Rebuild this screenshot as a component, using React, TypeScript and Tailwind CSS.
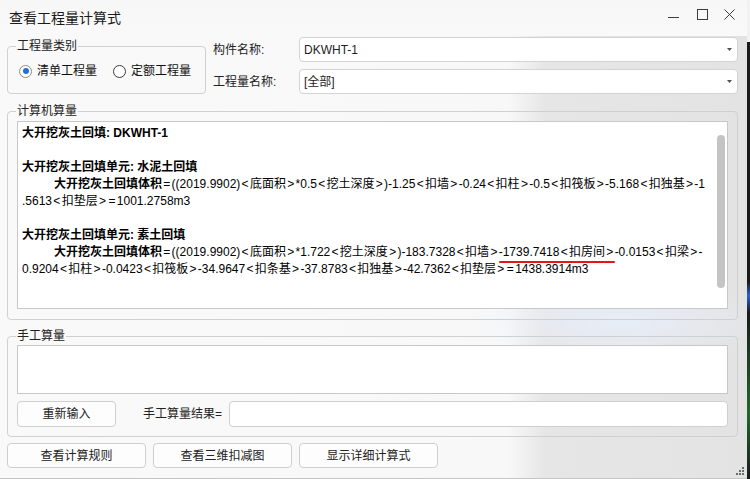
import React from "react";

const F = "font-['Liberation_Sans','Noto_Sans_CJK_SC',sans-serif]";

function Formula({ text }: { text: string }) {
  const parts = text.split(/([<>=])/);
  return (
    <>
      {parts.map((p, i) =>
        p === "<" || p === ">" || p === "=" ? (
          <span key={i} className="inline-block w-[9.6px] text-center">
            {p}
          </span>
        ) : (
          <React.Fragment key={i}>{p}</React.Fragment>
        )
      )}
    </>
  );
}

function Combo({ value, className = "" }: { value: string; className?: string }) {
  return (
    <div
      className={`flex-1 flex items-center bg-white border border-[#d3d3d3] rounded-[4px] pl-[4px] pr-[5px] ${className}`}
    >
      <span className="flex-1 text-[12px] text-[#1e1e1e]">{value}</span>
      <svg width="5" height="3" viewBox="0 0 5 3">
        <path d="M0 0H5L2.5 3Z" fill="#505050" />
      </svg>
    </div>
  );
}

function Radio({ checked, label }: { checked: boolean; label: string }) {
  return (
    <div className="flex items-center">
      <div
        className={`w-[13px] h-[13px] rounded-full bg-white border flex items-center justify-center ${
          checked ? "border-[#8a8a8a]" : "border-[#3a3a3a]"
        }`}
      >
        {checked && <div className="w-[6px] h-[6px] rounded-full bg-[#1f6fdc]" />}
      </div>
      <span className="ml-[5px] text-[12px] leading-[14px] text-[#111]">{label}</span>
    </div>
  );
}

function Btn({ label, className = "" }: { label: string; className?: string }) {
  return (
    <div
      className={`flex items-center justify-center bg-[#fdfdfd] border border-[#cfcfcf] rounded-[4px] text-[12px] text-[#222] ${className}`}
    >
      {label}
    </div>
  );
}

export default function App() {
  return (
    <div className={`w-[750px] h-[479px] flex overflow-hidden ${F}`}>
      <div className="relative w-[747px] h-[479px] flex flex-col border-b border-[#c4c4c4] bg-[radial-gradient(ellipse_150px_40px_at_620px_322px,#e7edf8,transparent),linear-gradient(to_right,#f9f9f9_0%,#f8f8f8_68%,#e6e6e6_73%,#e3e3e3_100%)]">
        {/* title bar */}
        <div className="h-[36px] flex items-center bg-[linear-gradient(to_bottom,#f7f7f7,#f9f9f9)] shrink-0">
          <span className="pl-[9px] text-[14px] text-[#1b1b1b]">查看工程量计算式</span>
          <div className="ml-auto flex items-start pr-[12px] h-[11px] mt-[-8px]">
            <svg width="11" height="11" viewBox="0 0 11 11">
              <path d="M0 8.5H11" stroke="#3c3c3c" strokeWidth="1" />
            </svg>
            <svg width="11" height="11" viewBox="0 0 11 11" className="ml-[18px]">
              <rect x="0.5" y="0.5" width="10" height="10" fill="none" stroke="#3c3c3c" strokeWidth="1" />
            </svg>
            <svg width="11" height="11" viewBox="0 0 11 11" className="ml-[16px]">
              <path d="M0.5 0.5L10.5 10.5M10.5 0.5L0.5 10.5" stroke="#3c3c3c" strokeWidth="1" />
            </svg>
          </div>
        </div>

        {/* body */}
        <div className="flex flex-col pl-[7px] pr-[9px]">
          {/* row 1 */}
          <div className="flex items-start">
            <fieldset className="w-[199px] h-[55px] mt-[3px] border border-[#d0d0d0] rounded-[4px]">
              <legend className="ml-[8px] px-[1px] text-[12px] leading-[14px] text-[#222]">工程量类别</legend>
              <div className="mt-[11px] h-[14px] flex items-center pl-[11px]">
                <Radio checked label="清单工程量" />
                <div className="ml-[16px]">
                  <Radio checked={false} label="定额工程量" />
                </div>
              </div>
            </fieldset>
            <div className="flex-1 ml-[7px] mt-[1px] flex flex-col">
              <div className="flex items-center h-[25px]">
                <span className="w-[86px] text-[12px] text-[#222]">构件名称:</span>
                <Combo value="DKWHT-1" className="h-[25px]" />
              </div>
              <div className="flex items-center h-[25px] mt-[7px]">
                <span className="w-[86px] text-[12px] text-[#222]">工程量名称:</span>
                <Combo value="[全部]" className="h-[25px]" />
              </div>
            </div>
          </div>

          {/* computer calc */}
          <fieldset className="mt-[10px] h-[216px] border border-[#d0d0d0] rounded-[4px]">
            <legend className="ml-[8px] px-[1px] text-[12px] leading-[14px] text-[#222]">计算机算量</legend>
            <div className="mt-[3px] mx-[9px] h-[188px] bg-white border border-[#c8c8c8] flex">
              <div className="flex-1 pl-[4px] pt-[3px] text-[12px] leading-[17px] text-black overflow-hidden">
                <div className="h-[17px] whitespace-nowrap font-bold">大开挖灰土回填: DKWHT-1</div>
                <div className="h-[17px]" />
                <div className="h-[17px] whitespace-nowrap font-bold">大开挖灰土回填单元: 水泥土回填</div>
                <div className="h-[17px] whitespace-nowrap pl-[32px]">
                  <span className="font-bold">大开挖灰土回填体积</span>
                  <Formula text="=((2019.9902)<底面积>*0.5<挖土深度>)-1.25<扣墙>-0.24<扣柱>-0.5<扣筏板>-5.168<扣独基>-1" />
                </div>
                <div className="h-[17px] whitespace-nowrap">
                  <Formula text=".5613<扣垫层>=1001.2758m3" />
                </div>
                <div className="h-[17px]" />
                <div className="h-[17px] whitespace-nowrap font-bold">大开挖灰土回填单元: 素土回填</div>
                <div className="h-[17px] whitespace-nowrap pl-[32px]">
                  <span className="font-bold">大开挖灰土回填体积</span>
                  <Formula text="=((2019.9902)<底面积>*1.722<挖土深度>)-183.7328<扣墙>" />
                  <span className="relative">
                    <Formula text="-1739.7418<扣房间>" />
                    <span className="absolute left-0 right-0 bottom-[-4px] h-[2px] rounded-full bg-[#e8141c]" />
                  </span>
                  <Formula text="-0.0153<扣梁>-" />
                </div>
                <div className="h-[17px] whitespace-nowrap">
                  <Formula text="0.9204<扣柱>-0.0423<扣筏板>-34.9647<扣条基>-37.8783<扣独基>-42.7362<扣垫层>=1438.3914m3" />
                </div>
              </div>
              <div className="w-[8px] mr-[2px] mt-[13px]">
                <div className="h-[153px] rounded-full bg-[#c4c4c4]" />
              </div>
            </div>
          </fieldset>

          {/* manual calc */}
          <fieldset className="mt-[9px] h-[108px] border border-[#d0d0d0] rounded-[4px]">
            <legend className="ml-[8px] px-[1px] text-[12px] leading-[14px] text-[#222]">手工算量</legend>
            <div className="mt-[2px] mx-[9px] h-[49px] bg-white border border-[#c8c8c8]" />
            <div className="mt-[7px] mx-[9px] h-[26px] flex items-center">
              <Btn label="重新输入" className="w-[99px] h-[26px]" />
              <span className="ml-[27px] w-[86px] text-[12px] text-[#222]">手工算量结果=</span>
              <div className="flex-1 h-[26px] bg-white border border-[#cfcfcf] rounded-[4px]" />
            </div>
          </fieldset>

          {/* bottom buttons */}
          <div className="mt-[6px] flex gap-[7px]">
            <Btn label="查看计算规则" className="w-[139px] h-[25px]" />
            <Btn label="查看三维扣减图" className="w-[139px] h-[25px]" />
            <Btn label="显示详细计算式" className="w-[139px] h-[25px]" />
          </div>
        </div>

        {/* resize grip */}
        <svg width="8" height="8" viewBox="0 0 8 8" className="absolute right-[3px] bottom-[3px]">
          <rect x="6" y="0" width="2" height="2" fill="#6a6a6a" />
          <rect x="3" y="3" width="2" height="2" fill="#6a6a6a" />
          <rect x="6" y="3" width="2" height="2" fill="#6a6a6a" />
          <rect x="0" y="6" width="2" height="2" fill="#6a6a6a" />
          <rect x="3" y="6" width="2" height="2" fill="#6a6a6a" />
          <rect x="6" y="6" width="2" height="2" fill="#6a6a6a" />
        </svg>
      </div>
      <div className="w-[3px] flex flex-col">
        <div className="h-[42px] bg-[#f2f2f2]" />
        <div className="flex-1 bg-[linear-gradient(to_bottom,#1a1a1a_0%,#1a1a1a_55%,#2a64c8_58%,#1a1a1a_62%,#1f6b2a_85%,#1a1a1a_100%)]" />
      </div>
    </div>
  );
}
